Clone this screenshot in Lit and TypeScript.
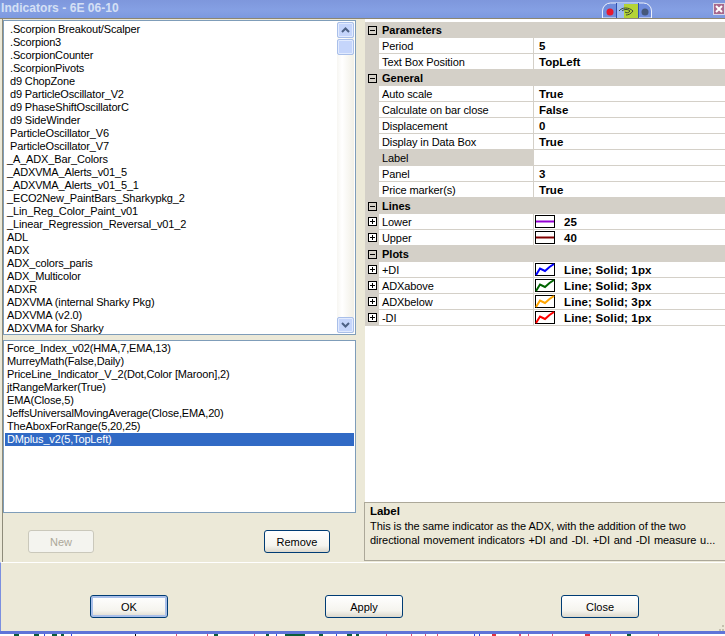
import { LitElement, css, html, svg } from "lit";
import { customElement } from "lit/decorators.js";

const INDICATORS: [string, boolean][] = [
  [".Scorpion Breakout/Scalper", true],
  [".Scorpion3", true],
  [".ScorpionCounter", true],
  [".ScorpionPivots", true],
  ["d9 ChopZone", true],
  ["d9 ParticleOscillator_V2", true],
  ["d9 PhaseShiftOscillatorC", true],
  ["d9 SideWinder", true],
  ["ParticleOscillator_V6", true],
  ["ParticleOscillator_V7", true],
  ["_A_ADX_Bar_Colors", false],
  ["_ADXVMA_Alerts_v01_5", false],
  ["_ADXVMA_Alerts_v01_5_1", false],
  ["_ECO2New_PaintBars_Sharkypkg_2", false],
  ["_Lin_Reg_Color_Paint_v01", false],
  ["_Linear_Regression_Reversal_v01_2", false],
  ["ADL", false],
  ["ADX", false],
  ["ADX_colors_paris", false],
  ["ADX_Multicolor", false],
  ["ADXR", false],
  ["ADXVMA (internal Sharky Pkg)", false],
  ["ADXVMA (v2.0)", false],
  ["ADXVMA for Sharky", false],
];

const APPLIED = [
  "Force_Index_v02(HMA,7,EMA,13)",
  "MurreyMath(False,Daily)",
  "PriceLine_Indicator_V_2(Dot,Color [Maroon],2)",
  "jtRangeMarker(True)",
  "EMA(Close,5)",
  "JeffsUniversalMovingAverage(Close,EMA,20)",
  "TheAboxForRange(5,20,25)",
  "DMplus_v2(5,TopLeft)",
];

type Row =
  | { kind: "head"; label: string }
  | { kind: "prop"; label: string; value: string; selected?: boolean }
  | { kind: "line"; label: string; value: string; color: string }
  | { kind: "plot"; label: string; value: string; color: string };

const ROWS: Row[] = [
  { kind: "head", label: "Parameters" },
  { kind: "prop", label: "Period", value: "5" },
  { kind: "prop", label: "Text Box Position", value: "TopLeft" },
  { kind: "head", label: "General" },
  { kind: "prop", label: "Auto scale", value: "True" },
  { kind: "prop", label: "Calculate on bar close", value: "False" },
  { kind: "prop", label: "Displacement", value: "0" },
  { kind: "prop", label: "Display in Data Box", value: "True" },
  { kind: "prop", label: "Label", value: "", selected: true },
  { kind: "prop", label: "Panel", value: "3" },
  { kind: "prop", label: "Price marker(s)", value: "True" },
  { kind: "head", label: "Lines" },
  { kind: "line", label: "Lower", value: "25", color: "#9400d3" },
  { kind: "line", label: "Upper", value: "40", color: "#800000" },
  { kind: "head", label: "Plots" },
  { kind: "plot", label: "+DI", value: "Line; Solid; 1px", color: "#0000ff" },
  { kind: "plot", label: "ADXabove", value: "Line; Solid; 3px", color: "#006400" },
  { kind: "plot", label: "ADXbelow", value: "Line; Solid; 3px", color: "#ffa500" },
  { kind: "plot", label: "-DI", value: "Line; Solid; 1px", color: "#ff0000" },
];

// bits of the chart behind the dialog, showing under its bottom edge
const SPECKS: [number, number, string][] = [
  [14, 5, "#0b5d3a"], [34, 5, "#0b5d3a"], [44, 1, "#3344dd"], [52, 5, "#0b5d3a"], [61, 3, "#0b5d3a"],
  [71, 1, "#3344dd"], [135, 1, "#000000"], [176, 1, "#d84a7a"], [207, 1, "#d84a7a"], [214, 4, "#0b5d3a"],
  [254, 1, "#d84a7a"], [266, 3, "#0b5d3a"], [276, 1, "#3344dd"], [285, 20, "#0b5d3a"], [319, 4, "#0b5d3a"],
  [336, 1, "#3344dd"], [347, 5, "#0b5d3a"], [356, 3, "#0b5d3a"], [386, 1, "#d84a7a"], [411, 1, "#d84a7a"],
  [425, 1, "#d84a7a"], [437, 1, "#d84a7a"], [474, 1, "#3344dd"], [479, 1, "#3344dd"], [492, 4, "#e03040"],
  [519, 2, "#d84a7a"], [528, 1, "#d84a7a"], [552, 1, "#d84a7a"], [585, 5, "#e03040"], [610, 1, "#d84a7a"],
  [627, 4, "#0b5d3a"], [658, 1, "#d84a7a"],
];

@customElement("app-root")
export class AppRoot extends LitElement {
  static styles = css`
    :host {
      display: block;
      width: 725px;
      height: 636px;
      overflow: hidden;
      font-family: "Liberation Sans", Arial, sans-serif;
      font-size: 11px;
      color: #000;
    }

    .window {
      position: relative;
      display: flex;
      flex-direction: column;
      height: 636px;
      background: #ece9d8;
    }

    .title {
      height: 18px;
      flex: none;
      padding-left: 1px;
      background: linear-gradient(#7e97dc, #85a0e4 60%, #7c99df);
      border-bottom: 1px solid #8c8672;
      color: #d5e0f5;
      font-size: 12px;
      font-weight: bold;
      letter-spacing: 0.05px;
      line-height: 17px;
    }

    .nvidia {
      position: absolute;
      left: 602px;
      top: 2px;
      width: 50px;
      height: 16px;
    }

    .close-x {
      position: absolute;
      left: 713px;
      top: 3px;
      width: 12px;
      height: 12px;
      background: #a8688c;
      border: 1px solid #d8d8e8;
      box-sizing: border-box;
    }

    .close-x svg {
      display: block;
    }

    .body {
      flex: none;
      height: 543px;
      display: flex;
      gap: 9px;
    }

    .left {
      width: 353px;
      margin-left: 2px;
      border-left: 1px solid #8e8b7a;
      padding-top: 1px;
      flex: none;
      display: flex;
      flex-direction: column;
      gap: 5px;
    }

    .list {
      box-sizing: border-box;
      background: #fff;
      border: 1px solid #7f9db9;
      overflow: hidden;
      letter-spacing: -0.15px;
    }

    .available {
      height: 315px;
      display: flex;
    }

    .items {
      flex: 1;
      padding-top: 2px;
    }

    .applied {
      height: 173px;
      padding: 1px;
    }

    .item {
      height: 13px;
      line-height: 13px;
      padding-left: 3px;
      white-space: nowrap;
    }

    .applied .item {
      padding-left: 2px;
    }

    .item.indent {
      padding-left: 6px;
    }

    .item.selected {
      background: #316ac5;
      color: #fff;
    }

    .scrollbar {
      width: 17px;
      flex: none;
      margin: 1px 1px 1px 0;
      display: flex;
      flex-direction: column;
      gap: 1px;
      background: linear-gradient(90deg, #f7f6f2, #fff 30%, #f1efe6);
    }

    .scroll-btn {
      box-sizing: border-box;
      height: 16px;
      display: flex;
      align-items: center;
      justify-content: center;
      background: #c5d5fb;
      border: 1px solid #a9bfe9;
      border-radius: 2px;
      box-shadow: inset 0 0 0 1px #e2ebfe;
    }

    .scroll-btn svg {
      width: 9px;
      height: 6px;
    }

    .spacer {
      flex: 1;
    }

    .actions {
      display: flex;
      justify-content: space-between;
      padding: 12px 26px 0 25px;
    }

    button {
      box-sizing: border-box;
      height: 23px;
      padding: 0;
      font: 11px "Liberation Sans", Arial, sans-serif;
      color: #000;
      border: 1px solid #003c74;
      border-radius: 3px;
      background: linear-gradient(#fff, #f5f4ee 70%, #dcd8cc);
    }

    .actions button {
      width: 66px;
    }

    button[disabled] {
      color: #aca899;
      border-color: #cac8bb;
      background: #f4f4ef;
    }

    .footer button {
      width: 78px;
    }

    .footer button:last-child {
      margin-left: 1px;
    }

    button.default {
      box-shadow: inset 0 0 0 2px #a9bfe9;
    }

    .right {
      flex: 1;
      display: flex;
      flex-direction: column;
      min-width: 0;
    }

    .grid {
      flex: none;
      height: 483px;
      background: #fff;
      padding-top: 3px;
      box-sizing: border-box;
    }

    .row {
      box-sizing: border-box;
      height: 16px;
      display: flex;
      align-items: center;
      line-height: 17px;
      border-bottom: 1px solid #d4d0c8;
      white-space: nowrap;
    }

    .row.head {
      background: #d4d0c8;
      font-weight: bold;
      border-bottom: 0;
      line-height: 15px;
    }

    .gutter {
      width: 14px;
      height: 16px;
      flex: none;
      display: flex;
      align-items: center;
      justify-content: center;
      background: #d4d0c8;
    }

    .row.head .gutter {
      background: none;
    }

    .box {
      display: block;
      width: 9px;
      height: 9px;
    }

    .name {
      box-sizing: border-box;
      width: 154px;
      height: 15px;
      flex: none;
      padding-left: 3px;
      letter-spacing: -0.1px;
    }

    .row.head .name {
      letter-spacing: 0;
    }

    .row.selected .name {
      background: #d4d0c8;
    }

    .value {
      flex: 1;
      height: 15px;
      display: flex;
      align-items: center;
      padding-left: 1px;
      border-left: 1px solid #d4d0c8;
      font-weight: bold;
      font-size: 11.5px;
    }

    .value .text {
      height: 15px;
    }

    .value .plain {
      padding-left: 4px;
    }

    .value .styled {
      letter-spacing: 0.12px;
    }

    .swatch {
      display: block;
      width: 20px;
      height: 13px;
      margin-right: 9px;
    }

    .description {
      box-sizing: border-box;
      height: 59px;
      margin-left: -1px;
      padding: 2px 5px;
      border: 1px solid #aca899;
      border-right: 0;
      line-height: 14px;
      letter-spacing: -0.05px;
      white-space: nowrap;
      overflow: hidden;
    }

    .description strong {
      display: block;
      font-size: 11.5px;
      line-height: 13px;
      margin-bottom: 1px;
    }

    .description .wide {
      display: block;
      word-spacing: 0.75px;
    }

    .footer {
      box-sizing: border-box;
      height: 69px;
      flex: none;
      display: flex;
      gap: 157px;
      padding: 32px 0 0 89px;
      border-top: 1px solid #fff;
      border-left: 1px solid #7b8fe0;
    }

    .edge {
      height: 3px;
      flex: none;
      background: #5f74d8;
    }

    .specks {
      display: block;
      height: 2px;
      flex: none;
      background: #fff;
    }

    .grip {
      position: absolute;
      left: 717px;
      top: 625px;
      width: 7px;
      height: 6px;
    }
  `;

  private chevron(up: boolean) {
    const d = up ? "M1 5 4.5 1.5 8 5" : "M1 1 4.5 4.5 8 1";
    return html`<svg viewBox="0 0 9 6"><path d=${d} fill="none" stroke="#4d6185" stroke-width="2"/></svg>`;
  }

  private expander(open: boolean) {
    return html`<svg class="box" viewBox="0 0 9 9">
      <rect x=".5" y=".5" width="8" height="8" fill=${open ? "none" : "#fff"} stroke="#000"/>
      <path d=${open ? "M2 4.5h5" : "M2 4.5h5M4.5 2v5"} stroke="#000"/>
    </svg>`;
  }

  private swatch(row: Row & { color: string }) {
    const mark =
      row.kind === "line"
        ? svg`<path d="M1 6.5h18" stroke=${row.color} stroke-width="2"/>`
        : svg`<path d="M1 12 5 5.5 10 8 14.5 4 19 1" fill="none" stroke=${row.color} stroke-width="2"/>`;
    return html`<svg class="swatch" viewBox="0 0 20 13">
      <rect x=".5" y=".5" width="19" height="12" fill="#fff" stroke="#000"/>
      ${mark}
    </svg>`;
  }

  private renderRow(row: Row) {
    if (row.kind === "head") {
      return html`<div class="row head">
        <span class="gutter">${this.expander(true)}</span>
        <span class="name">${row.label}</span>
      </div>`;
    }
    if (row.kind === "prop") {
      return html`<div class="row ${row.selected ? "selected" : ""}">
        <span class="gutter"></span>
        <span class="name">${row.label}</span>
        <span class="value"><span class="text plain">${row.value}</span></span>
      </div>`;
    }
    return html`<div class="row">
      <span class="gutter">${this.expander(false)}</span>
      <span class="name">${row.label}</span>
      <span class="value">${this.swatch(row)}<span class="text styled">${row.value}</span></span>
    </div>`;
  }

  render() {
    return html`
      <div class="window">
        <div class="title">Indicators - 6E 06-10</div>
        <svg class="nvidia" viewBox="0 0 50 16">
          <path d="M.5 16V9a8 8 0 0 1 8-8h33a8 8 0 0 1 8 8v7z" fill="#6f8cdc" stroke="#eef2fc"/>
          <rect x="14" y="1" width="23" height="15" fill="#9dbaf0"/>
          <rect x="22" y="2" width="14" height="14" fill="#b4d336"/>
          <rect x="14" y="1" width="1" height="15" fill="#2f4fb0"/>
          <rect x="36" y="1" width="1" height="15" fill="#2f4fb0"/>
          <circle cx="8" cy="10" r="3.5" fill="#e8182c"/>
          <circle cx="43" cy="10" r="3.5" fill="#46587a"/>
          <path d="M17 9c3-4 10-4 14 0 -2 3-5 4-7 4M20 9c2-2 6-2 8 0 -1 2-4 2-5 1" fill="none" stroke="#3a4a34"/>
        </svg>
        <div class="close-x">
          <svg viewBox="0 0 10 10">
            <path d="M2 2 8 8M8 2 2 8" stroke="#fff" stroke-width="2"/>
          </svg>
        </div>

        <div class="body">
          <div class="left">
            <div class="list available">
              <div class="items">
                ${INDICATORS.map(([name, indent]) => html`<div class="item ${indent ? "indent" : ""}">${name}</div>`)}
              </div>
              <div class="scrollbar">
                <div class="scroll-btn">${this.chevron(true)}</div>
                <div class="scroll-btn"></div>
                <div class="spacer"></div>
                <div class="scroll-btn">${this.chevron(false)}</div>
              </div>
            </div>
            <div class="list applied">
              ${APPLIED.map(
                (name, i) => html`<div class="item ${i === APPLIED.length - 1 ? "selected" : ""}">${name}</div>`
              )}
            </div>
            <div class="actions">
              <button disabled>New</button>
              <button>Remove</button>
            </div>
          </div>

          <div class="right">
            <div class="grid">${ROWS.map((row) => this.renderRow(row))}</div>
            <div class="description">
              <strong>Label</strong>
              This is the same indicator as the ADX, with the addition of the two
              <span class="wide">directional movement indicators +DI and -DI. +DI and -DI measure u...</span>
            </div>
          </div>
        </div>

        <div class="footer">
          <button class="default">OK</button>
          <button>Apply</button>
          <button>Close</button>
        </div>
        <div class="edge"></div>
        <svg class="specks" width="725" height="2">
          ${SPECKS.map(([x, w, c]) => svg`<rect x=${x} y="0" width=${w} height="2" fill=${c}/>`)}
        </svg>
        <svg class="grip" viewBox="0 0 7 6">
          <path d="M5 0h2v2H5zM2 4h2v2H2zM5 4h2v2H5z" fill="#c4c0ae"/>
        </svg>
      </div>
    `;
  }
}
